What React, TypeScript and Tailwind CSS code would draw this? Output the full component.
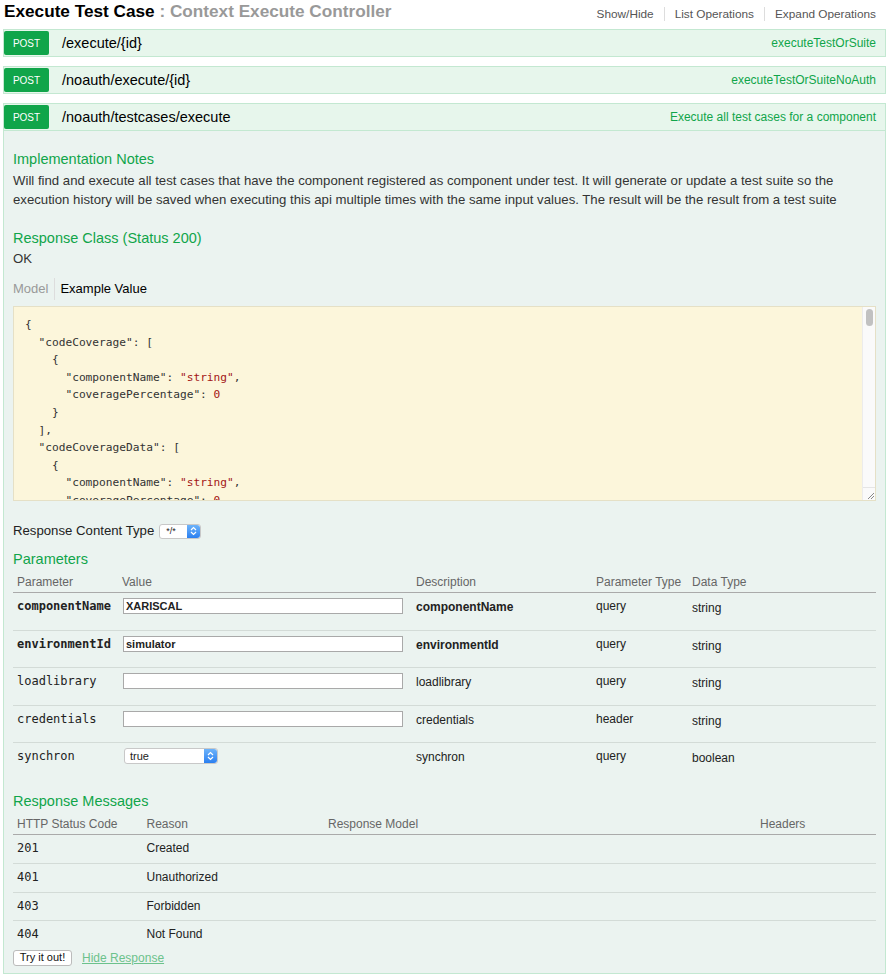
import React from "react";

const green = "text-[#10a54a]";

function PostRow({ path, summary }: { path: string; summary: string }) {
  return (
    <div className="ml-[3px] w-[883px] h-[28px] bg-[#e7f6ec] border border-[#c3e8d1] flex items-stretch py-[1px]">
      <div className="w-[45px] bg-[#10a54a] text-white text-[10px] flex items-center justify-center rounded-[2px]">POST</div>
      <div className="ml-[13px] flex items-center pt-[1px] text-[14.5px] text-black">{path}</div>
      <div className={`ml-auto mr-[9px] flex items-center text-[12px] ${green}`}>{summary}</div>
    </div>
  );
}

function SelectArrow() {
  return (
    <div className="w-[13px] h-full rounded-r-[3px] bg-gradient-to-b from-[#6cb3fa] to-[#2a7ff0] flex items-center justify-center">
      <svg width="7" height="10" viewBox="0 0 7 10" fill="none" stroke="white" strokeWidth="1.2">
        <path d="M1 4 L3.5 1.5 L6 4" />
        <path d="M1 6 L3.5 8.5 L6 6" />
      </svg>
    </div>
  );
}

const params = [
  { name: "componentName", value: "XARISCAL", desc: "componentName", ptype: "query", dtype: "string", req: true, kind: "input" },
  { name: "environmentId", value: "simulator", desc: "environmentId", ptype: "query", dtype: "string", req: true, kind: "input" },
  { name: "loadlibrary", value: "", desc: "loadlibrary", ptype: "query", dtype: "string", req: false, kind: "input" },
  { name: "credentials", value: "", desc: "credentials", ptype: "header", dtype: "string", req: false, kind: "input" },
  { name: "synchron", value: "true", desc: "synchron", ptype: "query", dtype: "boolean", req: false, kind: "select" },
];

const messages = [
  { code: "201", reason: "Created", h: "h-[29px]" },
  { code: "401", reason: "Unauthorized", h: "h-[29px]" },
  { code: "403", reason: "Forbidden", h: "h-[28px]" },
  { code: "404", reason: "Not Found", h: "h-[27px]" },
];

const mono = "font-['DejaVu_Sans_Mono',monospace]";

export default function App() {
  return (
    <div className="w-[892px] h-[975px] bg-white overflow-hidden font-['Liberation_Sans',Arial,sans-serif] text-[#000]">
      {/* header */}
      <div className="h-[29px] flex items-start justify-between pl-[4px] pr-[16px]">
        <div className="text-[17.2px] font-bold leading-[22px]">
          Execute Test Case<span className="text-[#999]"> : Context Execute Controller</span>
        </div>
        <div className="flex items-center mt-[6px] text-[11.8px] leading-[16px] text-[#555]">
          <span className="pr-[10px]">Show/Hide</span>
          <span className="border-l border-[#ddd] h-[14px]" />
          <span className="px-[10px]">List Operations</span>
          <span className="border-l border-[#ddd] h-[14px]" />
          <span className="pl-[10px]">Expand Operations</span>
        </div>
      </div>

      <PostRow path="/execute/{id}" summary="executeTestOrSuite" />
      <div className="h-[9px]" />
      <PostRow path="/noauth/execute/{id}" summary="executeTestOrSuiteNoAuth" />
      <div className="h-[9px]" />
      <PostRow path="/noauth/testcases/execute" summary="Execute all test cases for a component" />

      {/* expanded content */}
      <div className="ml-[3px] w-[883px] bg-[#ebf3f0] border border-t-0 border-[#c3e8d1] px-[9px] pt-[19px] pb-[6px]">
        <div className={`text-[14.5px] leading-[18px] ${green}`}>Implementation Notes</div>
        <p className="mt-[3px] text-[13.2px] leading-[19px] text-[#333]">
          Will find and execute all test cases that have the component registered as component under test. It will generate or update a test suite so the execution history will be saved when executing this api multiple times with the same input values. The result will be the result from a test suite
        </p>

        <div className={`mt-[20px] text-[14.5px] leading-[18px] ${green}`}>Response Class (Status 200)</div>
        <div className="mt-[2px] text-[13.2px] leading-[19px] text-[#333]">OK</div>

        <div className="mt-[10px] h-[22px] flex items-center text-[13px]">
          <span className="text-[#999] pr-[6px]">Model</span>
          <span className="border-l border-[#ddd] h-[22px]" />
          <span className="pl-[5px] text-black">Example Value</span>
        </div>

        <div className="mt-[6px] h-[195px] bg-[#fcf6db] border border-[#e5e0c6] flex">
          <pre className={`flex-1 overflow-hidden pl-[11px] pt-[9px] text-[11.2px] leading-[17.6px] text-[#333] ${mono}`}>
{`{
  "codeCoverage": [
    {
      "componentName": `}<span className="text-[#a31515]">"string"</span>{`,
      "coveragePercentage": `}<span className="text-[#a31515]">0</span>{`
    }
  ],
  "codeCoverageData": [
    {
      "componentName": `}<span className="text-[#a31515]">"string"</span>{`,
      "coveragePercentage": `}<span className="text-[#a31515]">0</span>{`
    }
  ]
}`}
          </pre>
          <div className="w-[13px] flex flex-col bg-[#fafafa] border-l border-[#ececec]">
            <div className="flex-1 pt-[2px] flex justify-center">
              <div className="w-[7px] h-[17px] rounded-full bg-[#c1c1c1]" />
            </div>
            <div className="h-[13px] border-t border-[#e5e5e5] flex items-end justify-end">
              <svg width="10" height="10" viewBox="0 0 10 10" stroke="#888" strokeWidth="1">
                <path d="M9 3 L3 9" />
                <path d="M9 6 L6 9" />
              </svg>
            </div>
          </div>
        </div>

        <div className="mt-[22px] h-[16px] flex items-center text-[13.2px] text-[#222]">
          <span>Response Content Type</span>
          <div className="ml-[5px] w-[42px] h-[15px] bg-white border border-[#c8c8c8] rounded-[3px] flex items-center">
            <span className="flex-1 pl-[6px] text-[9px] leading-none">*/*</span>
            <SelectArrow />
          </div>
        </div>

        <div className={`mt-[11px] text-[14.5px] leading-[18px] ${green}`}>Parameters</div>
        <div className="mt-[2px] grid grid-cols-[109px_294px_180px_96px_1fr] h-[23px] border-b border-[#aaa] text-[12px] leading-[16px] text-[#666]">
          <div className="pl-[4px] pt-[4px]">Parameter</div>
          <div className="pt-[4px]">Value</div>
          <div className="pt-[4px]">Description</div>
          <div className="pt-[4px]">Parameter Type</div>
          <div className="pt-[4px]">Data Type</div>
        </div>
        {params.map((p, i) => (
          <div
            key={p.name}
            className={`grid grid-cols-[109px_294px_180px_96px_1fr] h-[37.6px] pt-[5px] text-[12px] leading-[16px] text-[#222] ${i < params.length - 1 ? "border-b border-[#d3dbd7]" : ""}`}
          >
            <div className={`pl-[4px] ${mono} ${p.req ? "font-bold" : ""}`}>{p.name}</div>
            <div>
              {p.kind === "input" ? (
                <div className={`ml-[1px] w-[280px] h-[16px] bg-white border border-[#a9a9a9] pl-[2px] text-[11px] leading-[14px] ${p.req ? "font-bold" : ""}`}>
                  {p.value}
                </div>
              ) : (
                <div className="ml-[2px] w-[94px] h-[16px] bg-white border border-[#c8c8c8] rounded-[3px] flex items-center">
                  <span className="flex-1 pl-[5px] text-[11px] leading-none">{p.value}</span>
                  <SelectArrow />
                </div>
              )}
            </div>
            <div className={`pt-[1px] ${p.req ? "font-bold" : ""}`}>{p.desc}</div>
            <div>{p.ptype}</div>
            <div className="pt-[2px]">{p.dtype}</div>
          </div>
        ))}

        <div className={`mt-[11px] text-[14.5px] leading-[18px] ${green}`}>Response Messages</div>
        <div className="mt-[2px] grid grid-cols-[133.5px_181.5px_432px_1fr] h-[23px] border-b border-[#aaa] text-[12px] leading-[16px] text-[#666]">
          <div className="pl-[4px] pt-[4px]">HTTP Status Code</div>
          <div className="pt-[4px]">Reason</div>
          <div className="pt-[4px]">Response Model</div>
          <div className="pt-[4px]">Headers</div>
        </div>
        {messages.map((m, i) => (
          <div
            key={m.code}
            className={`grid grid-cols-[133.5px_181.5px_432px_1fr] ${m.h} pt-[5px] text-[12px] leading-[16px] text-[#222] ${i < messages.length - 1 ? "border-b border-[#d3dbd7]" : ""}`}
          >
            <div className={`pl-[4px] ${mono}`}>{m.code}</div>
            <div>{m.reason}</div>
            <div />
            <div />
          </div>
        ))}

        <div className="mt-[1px] flex items-center">
          <button className="w-[59px] h-[16px] bg-white border border-[#bbb] rounded-[3px] text-[11px] leading-none text-[#111]">Try it out!</button>
          <a className="ml-[10px] text-[12px] text-[#6cc28c] underline">Hide Response</a>
        </div>
      </div>
    </div>
  );
}
